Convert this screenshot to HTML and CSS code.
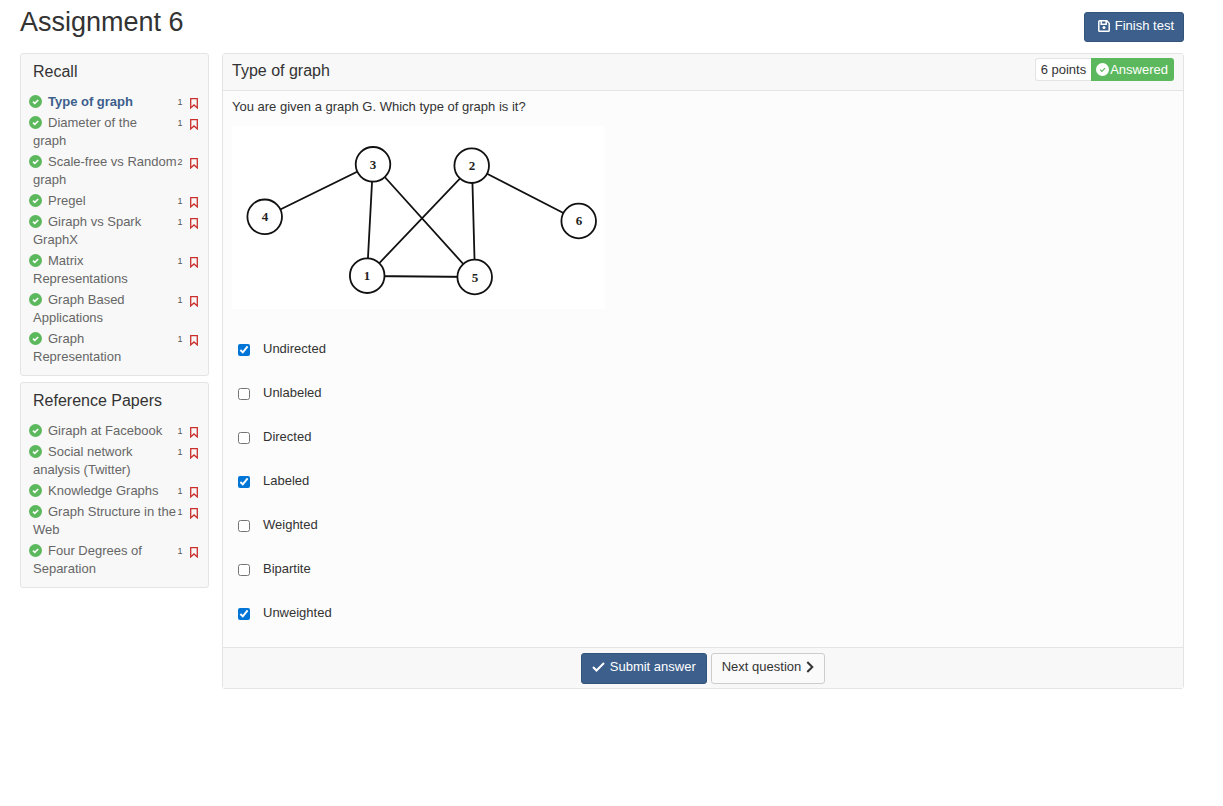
FILE: index.html
```html
<!DOCTYPE html>
<html lang="en">
<head>
<meta charset="utf-8">
<title>Assignment 6</title>
<link rel="stylesheet" href="styles.css">
</head>
<body>
<svg class="defs" aria-hidden="true">
  <symbol id="ok" viewBox="0 0 13 13"><circle cx="6.5" cy="6.5" r="6.5" fill="currentColor"/><path class="tick" d="M4 6.6l1.8 1.8L9.2 5" fill="none" stroke-width="1.6"/></symbol>
  <symbol id="mark" viewBox="0 0 8 11"><path d="M.7.7h6.6v9.2L4 6.9.7 9.9z" fill="none" stroke="currentColor" stroke-width="1.3"/></symbol>
</svg>
<header class="top">
  <h1>Assignment 6</h1>
  <button class="btn primary finish" type="button">
    <svg width="12" height="12" viewBox="0 0 12 12" fill="none" stroke="currentColor" stroke-width="1.5"><path d="M1.6.8h7.2l2.4 2.4v7.2a.8.8 0 0 1-.8.8H1.6a.8.8 0 0 1-.8-.8V1.6a.8.8 0 0 1 .8-.8z"/><path d="M3.2 1v3.2h5V1"/><circle cx="6" cy="7.6" r="1.5" fill="currentColor" stroke="none"/></svg>
    Finish test</button>
</header>
<div class="columns">
  <nav class="side">
    <section class="panel group">
      <h2>Recall</h2>
      <ul>
        <li><a href="#" class="current"><svg class="ok"><use href="#ok"/></svg>Type of graph</a><span class="meta"><span class="pts">1</span><svg class="mark"><use href="#mark"/></svg></span></li>
        <li><a href="#"><svg class="ok"><use href="#ok"/></svg>Diameter of the<br>graph</a><span class="meta"><span class="pts">1</span><svg class="mark"><use href="#mark"/></svg></span></li>
        <li><a href="#"><svg class="ok"><use href="#ok"/></svg>Scale-free vs Random<br>graph</a><span class="meta"><span class="pts">2</span><svg class="mark"><use href="#mark"/></svg></span></li>
        <li><a href="#"><svg class="ok"><use href="#ok"/></svg>Pregel</a><span class="meta"><span class="pts">1</span><svg class="mark"><use href="#mark"/></svg></span></li>
        <li><a href="#"><svg class="ok"><use href="#ok"/></svg>Giraph vs Spark<br>GraphX</a><span class="meta"><span class="pts">1</span><svg class="mark"><use href="#mark"/></svg></span></li>
        <li><a href="#"><svg class="ok"><use href="#ok"/></svg>Matrix<br>Representations</a><span class="meta"><span class="pts">1</span><svg class="mark"><use href="#mark"/></svg></span></li>
        <li><a href="#"><svg class="ok"><use href="#ok"/></svg>Graph Based<br>Applications</a><span class="meta"><span class="pts">1</span><svg class="mark"><use href="#mark"/></svg></span></li>
        <li><a href="#"><svg class="ok"><use href="#ok"/></svg>Graph<br>Representation</a><span class="meta"><span class="pts">1</span><svg class="mark"><use href="#mark"/></svg></span></li>
      </ul>
    </section>
    <section class="panel group">
      <h2>Reference Papers</h2>
      <ul>
        <li><a href="#"><svg class="ok"><use href="#ok"/></svg>Giraph at Facebook</a><span class="meta"><span class="pts">1</span><svg class="mark"><use href="#mark"/></svg></span></li>
        <li><a href="#"><svg class="ok"><use href="#ok"/></svg>Social network<br>analysis (Twitter)</a><span class="meta"><span class="pts">1</span><svg class="mark"><use href="#mark"/></svg></span></li>
        <li><a href="#"><svg class="ok"><use href="#ok"/></svg>Knowledge Graphs</a><span class="meta"><span class="pts">1</span><svg class="mark"><use href="#mark"/></svg></span></li>
        <li><a href="#"><svg class="ok"><use href="#ok"/></svg>Graph Structure in the<br>Web</a><span class="meta"><span class="pts">1</span><svg class="mark"><use href="#mark"/></svg></span></li>
        <li><a href="#"><svg class="ok"><use href="#ok"/></svg>Four Degrees of<br>Separation</a><span class="meta"><span class="pts">1</span><svg class="mark"><use href="#mark"/></svg></span></li>
      </ul>
    </section>
  </nav>
  <main class="panel question">
    <div class="head">
      <h2>Type of graph</h2>
      <div class="status"><span class="points">6 points</span><span class="answered"><svg width="13" height="13" viewBox="0 0 13 13"><circle cx="6.5" cy="6.5" r="6.5" fill="#fff"/><path d="M4.2 6.6l1.7 1.7L9 5.2" fill="none" stroke="#5cb85c" stroke-width="1.2"/></svg>Answered</span></div>
    </div>
    <div class="body">
      <p>You are given a graph G. Which type of graph is it?</p>
      <svg class="graph" width="373" height="183" viewBox="0 0 373 183">
        <rect width="373" height="183" fill="#fff"/>
        <path d="M33 91L141 38L135 150L243 151L141 38M135 150L240 40L243 151M240 40L347 95" fill="none" stroke="#111" stroke-width="1.8"/>
        <g fill="#fff" stroke="#111" stroke-width="1.8"><circle cx="141" cy="38.3" r="17.3"/><circle cx="239.7" cy="39.7" r="17.3"/><circle cx="32.7" cy="90.8" r="17.3"/><circle cx="346.7" cy="95" r="17.3"/><circle cx="135.2" cy="149.7" r="17.3"/><circle cx="242.7" cy="151" r="17.3"/></g>
        <g class="digits"><text x="141" y="43">3</text><text x="240" y="44">2</text><text x="33" y="95">4</text><text x="347" y="99">6</text><text x="135" y="154">1</text><text x="243" y="156">5</text></g>
      </svg>
      <div class="options">
        <label><input type="checkbox" checked><span>Undirected</span></label>
        <label><input type="checkbox"><span>Unlabeled</span></label>
        <label><input type="checkbox"><span>Directed</span></label>
        <label><input type="checkbox" checked><span>Labeled</span></label>
        <label><input type="checkbox"><span>Weighted</span></label>
        <label><input type="checkbox"><span>Bipartite</span></label>
        <label><input type="checkbox" checked><span>Unweighted</span></label>
      </div>
    </div>
    <div class="foot">
      <button class="btn primary" type="button"><svg width="13" height="10" viewBox="0 0 13 10" fill="none" stroke="currentColor" stroke-width="2"><path d="M1 5l3.5 3.5L12 1"/></svg>Submit answer</button>
      <button class="btn" type="button">Next question<svg width="8" height="12" viewBox="0 0 8 12" fill="none" stroke="currentColor" stroke-width="2"><path d="M1.3 1L6.3 6l-5 5"/></svg></button>
    </div>
  </main>
</div>
</body>
</html>
```
FILE: styles.css
```css
* { box-sizing: border-box; }
body {
  margin: 0;
  padding: 0 39px 20px 20px;
  font: 13px/18px "Liberation Sans", Arial, sans-serif;
  color: #333;
  background: #fff;
}
h1, h2, p, ul { margin: 0; padding: 0; font-weight: 400; }
.defs { display: none; }
.top { display: flex; justify-content: space-between; height: 53px; }
h1 { font-size: 27px; line-height: 32px; padding-top: 6px; }
h2 { font-size: 16px; line-height: 20px; }
.btn {
  display: flex;
  align-items: center;
  gap: 5px;
  height: 31px;
  padding: 0 10px 4px;
  border: 1px solid #ccc;
  border-radius: 3px;
  background: #fafafa;
  color: #333;
  font: inherit;
  white-space: nowrap;
}
.primary { background: #3c5f8c; border-color: #34537b; color: #fff; }
.finish { margin-top: 12px; height: 30px; padding: 0 9px 3px 13px; }
.columns { display: grid; grid-template-columns: 189px 1fr; gap: 13px; align-items: start; }
.panel { border: 1px solid #e4e4e4; border-radius: 3px; background: #f8f8f8; }
.side { display: grid; gap: 6px; }
.group { padding: 8px 8px 9px 12px; }
.group ul { list-style: none; padding-top: 8px; }
.group li { display: flex; justify-content: space-between; padding-top: 3px; }
.group a { flex: 0 1 142px; min-width: 0; color: #666; text-decoration: none; white-space: nowrap; }
.group .current { color: #3c5f8c; font-weight: 700; }
.ok { width: 13px; height: 13px; color: #5cb85c; margin: 0 6px 0 -4px; vertical-align: -2px; }
.tick { stroke: #fff; }
.meta { display: flex; gap: 5px; align-items: center; height: 18px; }
.pts { width: 10px; line-height: 15px; font-size: 9px; text-align: center; color: #555; }
.mark { width: 8px; height: 11px; margin: 2px 2px 0 0; color: #c9302c; }
.question { background: #fcfcfc; }
.head {
  display: flex;
  justify-content: space-between;
  align-items: flex-start;
  height: 37px;
  padding: 4px 9px 0;
  border-bottom: 1px solid #e4e4e4;
  background: #f8f8f8;
}
.head h2 { padding-top: 3px; }
.status { display: flex; line-height: 21px; }
.points { height: 23px; padding: 0 5px; border: 1px solid #e4e4e4; border-right: 0; border-radius: 3px 0 0 3px; background: #fff; }
.answered { display: flex; align-items: center; height: 23px; padding: 0 6px 0 5px; border-radius: 0 3px 3px 0; background: #5cb85c; color: #fff; gap: 1px; }
.body { padding: 7px 9px 12px; }
.graph { display: block; margin-top: 10px; }
.digits { font: 700 13px "Liberation Serif", serif; text-anchor: middle; fill: #222; }
.options { display: grid; gap: 26px; padding: 31px 0 13px 6px; }
.options label { display: flex; align-items: center; gap: 13px; }
.options input { width: 12px; height: 12px; margin: 2px 0 0; accent-color: #0075d8; }
.foot { display: flex; justify-content: center; gap: 4px; padding: 5px 0 4px; border-top: 1px solid #e4e4e4; background: #f8f8f8; }
```
